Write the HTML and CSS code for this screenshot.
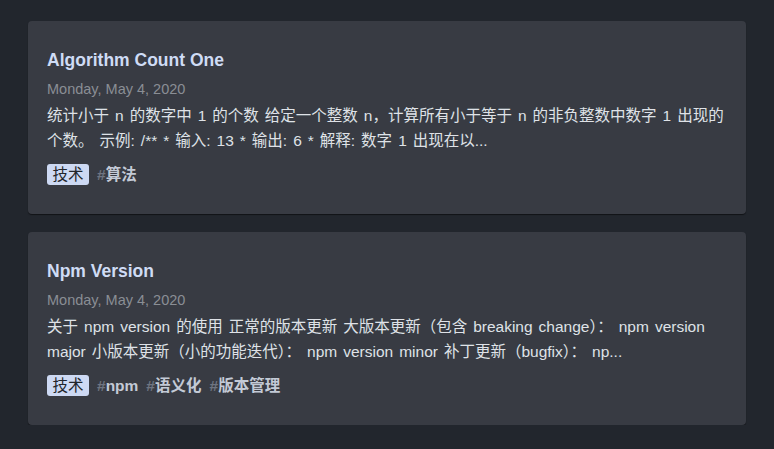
FILE: index.html
```html
<!DOCTYPE html>
<html lang="zh-CN">
<head>
<meta charset="utf-8">
<link rel="stylesheet" href="styles.css">
</head>
<body>
<main class="list">
  <article class="card">
    <h2 class="title">Algorithm Count One</h2>
    <div class="date">Monday, May 4, 2020</div>
    <p class="excerpt">统计小于 n 的数字中 1 的个数 给定一个整数 n，计算所有小于等于 n 的非负整数中数字 1 出现的个数。 示例: /** * 输入: 13 * 输出: 6 * 解释: 数字 1 出现在以...</p>
    <div class="tags">
      <span class="category">技术</span>
      <span class="tag"><span class="hash">#</span>算法</span>
    </div>
  </article>
  <article class="card">
    <h2 class="title">Npm Version</h2>
    <div class="date">Monday, May 4, 2020</div>
    <p class="excerpt">关于 npm version 的使用 正常的版本更新 大版本更新（包含 breaking change）： npm version major 小版本更新（小的功能迭代）： npm version minor 补丁更新（bugfix）： np...</p>
    <div class="tags">
      <span class="category">技术</span>
      <span class="tag"><span class="hash">#</span>npm</span>
      <span class="tag"><span class="hash">#</span>语义化</span>
      <span class="tag"><span class="hash">#</span>版本管理</span>
    </div>
  </article>
</main>
</body>
</html>
```

FILE: styles.css
```css
html, body {
  margin: 0;
  padding: 0;
  background: #22262d;
}
body {
  font-family: "Liberation Sans", "Noto Sans CJK SC", sans-serif;
  color: #dfe3ea;
}
.list {
  display: flex;
  flex-direction: column;
  gap: 18px;
  padding: 21px 28px 0 28px;
}
.card {
  background: #383b43;
  border-radius: 4px;
  padding: 27px 19px 29px 19px;
  box-shadow: 0 1px 1px rgba(0, 0, 0, 0.5);
}
.title {
  margin: 0;
  font-size: 17.5px;
  line-height: 24px;
  font-weight: bold;
  color: #cfdcf5;
}
.date {
  margin-top: 8px;
  font-size: 14.5px;
  line-height: 18px;
  color: #8a8e95;
}
.excerpt {
  margin: 5px 0 0 0;
  font-size: 15.5px;
  line-height: 25px;
  word-spacing: 1.7px;
  color: #dfe2e7;
}
.tags {
  margin-top: 11px;
  height: 21px;
  display: flex;
  align-items: center;
  gap: 8px;
}
.category {
  display: inline-block;
  background: #cdd9f3;
  color: #23262c;
  font-size: 15.5px;
  line-height: 21px;
  padding: 0 5.5px;
  border-radius: 3px;
}
.tag {
  font-size: 15.5px;
  line-height: 21px;
  font-weight: bold;
  color: #c3cad6;
}
.hash {
  color: #6f7581;
}
```
